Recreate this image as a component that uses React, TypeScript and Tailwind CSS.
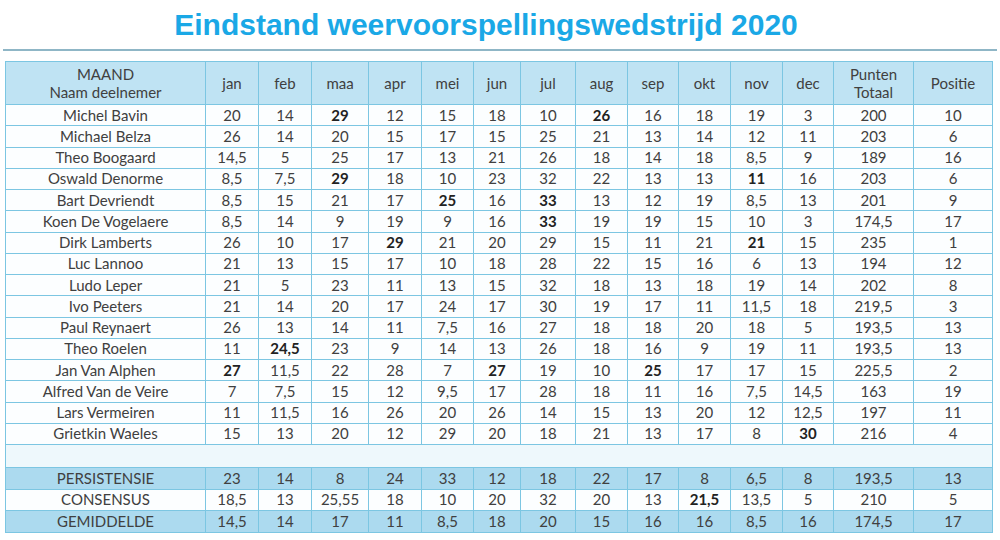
import React from "react";

// Column widths in px: name, 12 months, total, position
const widths = [200, 53, 53, 57, 53, 52, 47, 55, 52, 51, 52, 52, 51, 80, 79];
const months = ["jan", "feb", "maa", "apr", "mei", "jun", "jul", "aug", "sep", "okt", "nov", "dec"];

// "*" in front of a value = printed bold
const rows: [string, string][] = [
  ["Michel Bavin", "20 14 *29 12 15 18 10 *26 16 18 19 3 200 10"],
  ["Michael Belza", "26 14 20 15 17 15 25 21 13 14 12 11 203 6"],
  ["Theo Boogaard", "14,5 5 25 17 13 21 26 18 14 18 8,5 9 189 16"],
  ["Oswald Denorme", "8,5 7,5 *29 18 10 23 32 22 13 13 *11 16 203 6"],
  ["Bart Devriendt", "8,5 15 21 17 *25 16 *33 13 12 19 8,5 13 201 9"],
  ["Koen De Vogelaere", "8,5 14 9 19 9 16 *33 19 19 15 10 3 174,5 17"],
  ["Dirk Lamberts", "26 10 17 *29 21 20 29 15 11 21 *21 15 235 1"],
  ["Luc Lannoo", "21 13 15 17 10 18 28 22 15 16 6 13 194 12"],
  ["Ludo Leper", "21 5 23 11 13 15 32 18 13 18 19 14 202 8"],
  ["Ivo Peeters", "21 14 20 17 24 17 30 19 17 11 11,5 18 219,5 3"],
  ["Paul Reynaert", "26 13 14 11 7,5 16 27 18 18 20 18 5 193,5 13"],
  ["Theo Roelen", "11 *24,5 23 9 14 13 26 18 16 9 19 11 193,5 13"],
  ["Jan Van Alphen", "*27 11,5 22 28 7 *27 19 10 *25 17 17 15 225,5 2"],
  ["Alfred Van de Veire", "7 7,5 15 12 9,5 17 28 18 11 16 7,5 14,5 163 19"],
  ["Lars Vermeiren", "11 11,5 16 26 20 26 14 15 13 20 12 12,5 197 11"],
  ["Grietkin Waeles", "15 13 20 12 29 20 18 21 13 17 8 *30 216 4"],
];

const summary: [string, string, boolean][] = [
  ["PERSISTENSIE", "23 14 8 24 33 12 18 22 17 8 6,5 8 193,5 13", true],
  ["CONSENSUS", "18,5 13 25,55 18 10 20 32 20 13 *21,5 13,5 5 210 5", false],
  ["GEMIDDELDE", "14,5 14 17 11 8,5 18 20 15 16 16 8,5 16 174,5 17", true],
];

function Cells({ values }: { values: string }) {
  return (
    <>
      {values.split(" ").map((v, i) => {
        const bold = v.startsWith("*");
        return (
          <td
            key={i}
            className={
              "border border-[#7cc6e2] p-0 text-center " +
              (bold ? "font-bold text-[#222]" : "")
            }
          >
            {bold ? v.slice(1) : v}
          </td>
        );
      })}
    </>
  );
}

export default function App() {
  return (
    <div className="h-[540px] w-[1000px] bg-white font-['Lato','Liberation_Sans',sans-serif] text-[15px] text-[#404040]">
      <h1 className="pt-[8px] pr-[28px] text-center font-['Liberation_Sans',Arial,sans-serif] text-[30px] leading-[34px] font-bold text-[#1aa8e6]">
        Eindstand weervoorspellingswedstrijd 2020
      </h1>
      <div className="mx-[3px] mt-[7px] h-[2px] bg-[#8fb6c6]" />

      <table className="mt-[10px] ml-[5px] w-[987px] table-fixed border-collapse border border-[#5fb5d8]">
        <colgroup>
          {widths.map((w, i) => (
            <col key={i} style={{ width: w }} />
          ))}
        </colgroup>
        <thead>
          <tr className="h-[43px] bg-[#bfe3f3] leading-[18px]">
            <th className="border border-[#7cc6e2] font-normal">
              MAAND
              <br />
              Naam deelnemer
            </th>
            {months.map((m) => (
              <th key={m} className="border border-[#7cc6e2] font-normal">
                {m}
              </th>
            ))}
            <th className="border border-[#7cc6e2] font-normal">
              Punten
              <br />
              Totaal
            </th>
            <th className="border border-[#7cc6e2] font-normal">Positie</th>
          </tr>
        </thead>
        <tbody>
          {rows.map(([name, values]) => (
            <tr key={name} className="h-[21.25px] bg-[#fcfeff] leading-[19px]">
              <td className="border border-[#7cc6e2] p-0 text-center">{name}</td>
              <Cells values={values} />
            </tr>
          ))}
          <tr className="h-[23px] bg-[#eef8fc]">
            <td colSpan={15} className="border border-[#7cc6e2] p-0" />
          </tr>
          {summary.map(([label, values, shaded]) => (
            <tr
              key={label}
              className={
                "h-[21.6px] leading-[19px] " + (shaded ? "bg-[#acdaef]" : "bg-[#fcfeff]")
              }
            >
              <td className="border border-[#7cc6e2] p-0 text-center">{label}</td>
              <Cells values={values} />
            </tr>
          ))}
        </tbody>
      </table>
    </div>
  );
}
